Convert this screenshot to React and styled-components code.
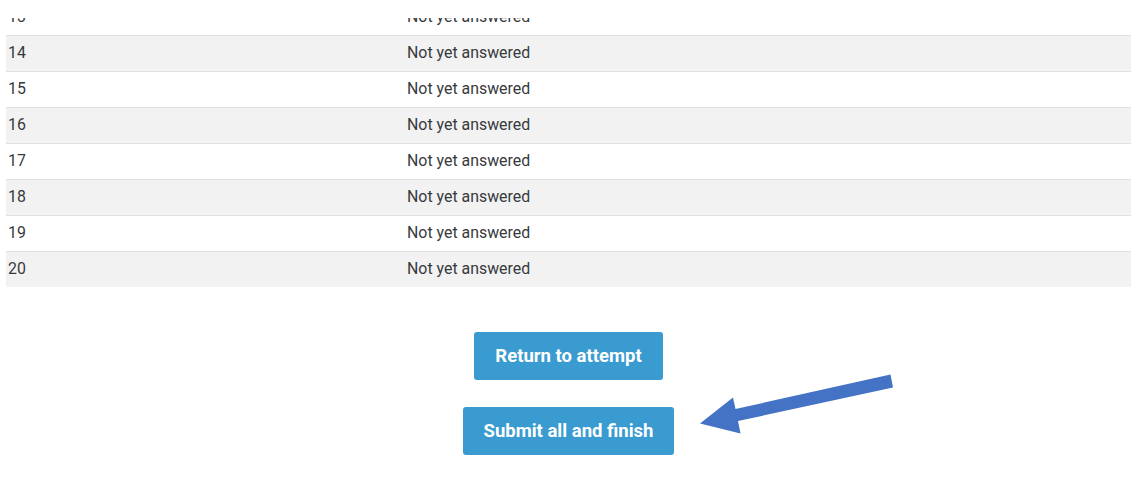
import React from 'react';
import styled, { createGlobalStyle } from 'styled-components';

const GlobalStyle = createGlobalStyle`
  html, body {
    margin: 0;
    padding: 0;
    background: #fff;
  }
  body {
    font-family: Roboto, "Liberation Sans", Arial, sans-serif;
    color: #373a3c;
  }
`;

const TopMask = styled.div`
  position: fixed;
  top: 0;
  left: 0;
  right: 0;
  height: 18px;
  background: #fff;
  z-index: 2;
`;

const Page = styled.div`
  position: relative;
  margin-top: -1px;
  padding: 0 11px 0 6px;
  height: 482px;
  box-sizing: border-box;
`;

const Table = styled.div`
  display: flex;
  flex-direction: column;
`;

const Row = styled.div`
  display: grid;
  grid-template-columns: 399px 1fr;
  height: 36px;
  box-sizing: border-box;
  border-top: 1px solid #dee2e6;
  background: ${props => props.striped ? '#f2f2f2' : '#fff'};
  font-size: 15.9px;
  line-height: 34px;
`;

const Cell = styled.div`
  padding: 0 2px;
  white-space: nowrap;
`;

const Actions = styled.div`
  display: flex;
  flex-direction: column;
  align-items: center;
  gap: 27px;
  padding-top: 45px;
`;

const Button = styled.button`
  height: 48px;
  padding: 0 21px;
  border: 0;
  border-radius: 3px;
  background: #399bcf;
  color: #fff;
  font-family: Roboto, "Liberation Sans", Arial, sans-serif;
  font-weight: 700;
  font-size: 18.5px;
  cursor: pointer;
`;

const Arrow = styled.svg`
  position: absolute;
  left: 690px;
  top: 371px;
  width: 210px;
  height: 70px;
`;

const rows = [13, 14, 15, 16, 17, 18, 19, 20];

const App = () => {
  return (
    <>
      <GlobalStyle />
      <TopMask />
      <Page>
        <Table>
          {rows.map(n => (
            <Row key={`row-${n}`} striped={n % 2 === 0}>
              <Cell>{n}</Cell>
              <Cell>Not yet answered</Cell>
            </Row>
          ))}
        </Table>
        <Actions>
          <Button>Return to attempt</Button>
          <Button>Submit all and finish</Button>
        </Actions>
        <Arrow viewBox="690 370 210 70">
          <polygon
            fill="#4472c4"
            points="890.5,374.5 893,387.5 738,421 740.5,433.5 700,423.5 733,397.5 735.5,409"
          />
        </Arrow>
      </Page>
    </>
  );
};

export default App;
